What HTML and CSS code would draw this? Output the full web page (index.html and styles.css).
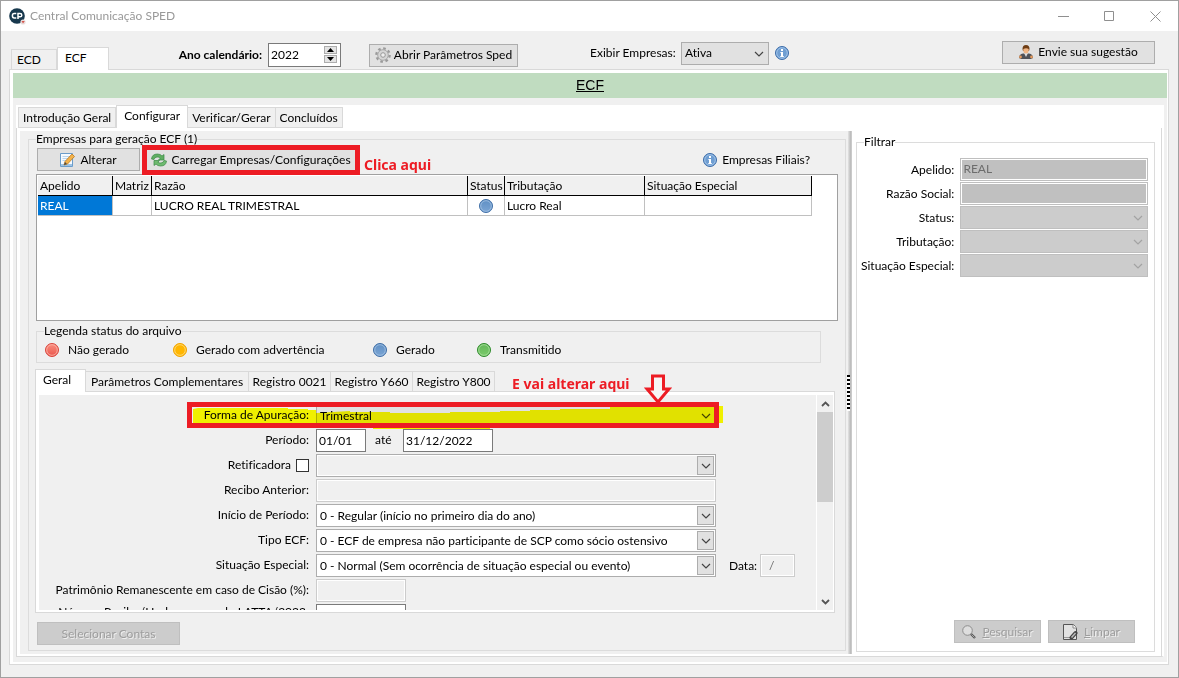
FILE: index.html
```html
<!DOCTYPE html>
<html lang="pt-BR">
<head>
<meta charset="utf-8">
<title>Central Comunicação SPED</title>
<link rel="stylesheet" href="styles.css">
</head>
<body>
<svg class="defs" width="0" height="0" aria-hidden="true">
  <defs>
    <linearGradient id="g-blue" x1="0" y1="0" x2="0" y2="1"><stop offset="0" stop-color="#5f8fc4"/><stop offset="1" stop-color="#7ba5d4"/></linearGradient>
    <linearGradient id="g-red" x1="0" y1="0" x2="0" y2="1"><stop offset="0" stop-color="#fa8f80"/><stop offset="1" stop-color="#e9564d"/></linearGradient>
    <linearGradient id="g-green" x1="0" y1="0" x2="0" y2="1"><stop offset="0" stop-color="#62b658"/><stop offset="1" stop-color="#7ccb6c"/></linearGradient>
    <symbol id="chev" viewBox="0 0 10 6"><path d="M1 1l4 4 4-4" fill="none" stroke="currentColor" stroke-width="1.2"/></symbol>
    <symbol id="info" viewBox="0 0 14 14">
      <circle cx="7" cy="7" r="6.5" fill="#6f9ed2" stroke="#3c6ca8"/>
      <circle cx="7" cy="7" r="5.3" fill="none" stroke="#a5c6ea" stroke-width=".9"/>
      <path d="M6 3h2v2H6zM5.4 6H8v4h.8v1H5.3v-1H6V7h-.6z" fill="#fff"/>
    </symbol>
    <symbol id="dot-blue" viewBox="0 0 14 14"><circle cx="7" cy="7" r="6.5" fill="url(#g-blue)" stroke="#3f6ea6"/><circle cx="7" cy="7" r="5.3" fill="none" stroke="#9dbde0" stroke-width=".9"/></symbol>
    <symbol id="dot-red" viewBox="0 0 14 14"><circle cx="7" cy="7" r="6.5" fill="url(#g-red)" stroke="#d8453d"/><circle cx="7" cy="7" r="5.3" fill="none" stroke="#fbb0a4" stroke-width=".9"/></symbol>
    <symbol id="dot-yellow" viewBox="0 0 14 14"><circle cx="7" cy="7" r="6.5" fill="#ffb600" stroke="#f0a400"/><circle cx="7" cy="7" r="5.3" fill="none" stroke="#ffd978" stroke-width=".9"/></symbol>
    <symbol id="dot-green" viewBox="0 0 14 14"><circle cx="7" cy="7" r="6.5" fill="url(#g-green)" stroke="#2f8a2c"/><circle cx="7" cy="7" r="5.3" fill="none" stroke="#a4dc98" stroke-width=".9"/></symbol>
  </defs>
</svg>

<div class="window">
  <header class="titlebar">
    <svg class="app-icon" width="17" height="17" viewBox="0 0 17 17">
      <circle cx="8" cy="8" r="7.8" fill="#17384d"/>
      <path d="M7.3 5.6H5.2Q3.4 5.6 3.4 7.8T5.2 10h2.1M9 11V5.6h2q1.8 0 1.8 1.6T11 8.8H9" fill="none" stroke="#fff" stroke-width="1.5"/>
      <circle cx="14" cy="14" r="2.6" fill="#e9dede"/><path d="M12.5 13l1.5 2.5 1.8-2.5z" fill="#d4584e"/>
    </svg>
    <span class="title">Central Comunicação SPED</span>
    <div class="caption">
      <button type="button" aria-label="Minimizar"><svg width="11" height="11" viewBox="0 0 11 11"><path d="M0 5.5h11" stroke="#8f8f8f"/></svg></button>
      <button type="button" aria-label="Maximizar"><svg width="11" height="11" viewBox="0 0 11 11"><path d="M.5.5h9v9h-9z" fill="none" stroke="#8f8f8f"/></svg></button>
      <button type="button" aria-label="Fechar"><svg width="11" height="11" viewBox="0 0 11 11"><path d="M.5.5l10 10M10.5.5l-10 10" stroke="#8f8f8f"/></svg></button>
    </div>
  </header>

  <div class="topbar">
    <div class="tabs" role="tablist">
      <button type="button" class="tab" role="tab">ECD</button>
      <button type="button" class="tab active wide" role="tab" aria-selected="true">ECF</button>
    </div>
    <div class="tools year-tools">
      <label class="bold" for="ano">Ano calendário:</label>
      <span class="spinner">
        <input id="ano" type="text" value="2022">
        <span class="spin-buttons">
          <button type="button" aria-label="Aumentar"><svg width="7" height="4" viewBox="0 0 7 4"><path d="M0 4L3.5 0 7 4z"/></svg></button>
          <button type="button" aria-label="Diminuir"><svg width="7" height="4" viewBox="0 0 7 4"><path d="M0 0l3.500 4L7 0z"/></svg></button>
        </span>
      </span>
      <button type="button" class="btn params">
        <svg width="16" height="16" viewBox="0 0 16 16"><circle cx="8" cy="8" r="6.600" fill="none" stroke="#9a9a9a" stroke-width="2.400" stroke-dasharray="2.600 2.580"/><circle cx="8" cy="8" r="5.300" fill="#d6d6d6" stroke="#a8a8a8"/><circle cx="8" cy="8" r="2.300" fill="#eee" stroke="#999"/></svg>
        Abrir Parâmetros Sped
      </button>
    </div>
    <div class="tools filter-tools">
      <label for="exibir">Exibir Empresas:</label>
      <span class="combo grey short">
        <select id="exibir"><option>Ativa</option></select>
        <svg class="arrow" width="10" height="6"><use href="#chev"/></svg>
      </span>
      <svg width="14" height="14"><use href="#info"/></svg>
    </div>
    <div class="tools suggest-tools">
      <button type="button" class="btn suggest">
        <svg width="14" height="14" viewBox="0 0 14 14"><path d="M0 13q0-4 4-4.600h6q4 .6 4 4.600l-2 1H2z" fill="#4f5257"/><path d="M5 8l2 4 2-4z" fill="#ddd"/><path d="M3.500 4Q3.500 0 7 0t3.500 4l-.5 2H4z" fill="#6f3d14"/><path d="M4.300 4q3-1.500 5.400 0v2Q9.500 8.500 7 8.500T4.300 6z" fill="#efb584"/><circle cx="1.500" cy="12" r="1.400" fill="#e59a5d"/><circle cx="12.500" cy="12" r="1.400" fill="#e59a5d"/></svg>
        Envie sua sugestão
      </button>
    </div>
  </div>

  <main class="page">
    <h1 class="banner">ECF</h1>
    <div class="inner">
      <div class="tabs main-tabs" role="tablist">
        <button type="button" class="tab" role="tab">Introdução Geral</button>
        <button type="button" class="tab active" role="tab" aria-selected="true">Configurar</button>
        <button type="button" class="tab" role="tab">Verificar/Gerar</button>
        <button type="button" class="tab" role="tab">Concluídos</button>
      </div>
      <div class="panes">
        <div class="left-pane">
          <fieldset class="group companies">
            <legend>Empresas para geração ECF (1)</legend>
            <div class="actions">
              <button type="button" class="btn edit">
                <svg width="15" height="16" viewBox="0 0 15 16"><path d="M.5 1.500h12v13H.5z" fill="#f6fafe" stroke="#6a9cca"/><path d="M2.500 4.500h8M2.500 6.500h6M2.500 8.500h4" stroke="#b8d3ec"/><path d="M1 12h11v2H1z" fill="#9cc3e6"/><path d="M4 13l1-3.500L12 2l2.500 2.500L7.500 12z" fill="#f3b24a" stroke="#b97a23" stroke-width=".8"/><path d="M4 13l1-3 2 2z" fill="#494949"/></svg>
                Alterar
              </button>
              <span class="callout">
                <button type="button" class="btn load">
                  <svg width="16" height="14" viewBox="0 0 16 14"><path d="M.5 6Q1 1 6.500 1q3 0 4.500 2l2-1.500V7H7.500l1.700-1.700Q8 3.800 6 4 3.500 4.200 3 6.500z" fill="#5fae62" stroke="#3b8a45" stroke-width=".7"/><path d="M15.500 8Q15 13 9.500 13q-3 0-4.500-2l-2 1.500V7.500h5.500L6.800 9.200Q8 10.200 10 10q2.500-.2 3-2.500z" fill="#6fbb70" stroke="#3b8a45" stroke-width=".7"/></svg>
                  Carregar Empresas/Configurações
                </button>
              </span>
              <span class="note">Clica aqui</span>
              <span class="branches"><svg width="14" height="14"><use href="#info"/></svg>Empresas Filiais?</span>
            </div>
            <div class="grid-box">
              <table class="grid">
                <colgroup><col class="c-nick"><col class="c-main"><col class="c-name"><col class="c-stat"><col class="c-trib"><col class="c-sit"></colgroup>
                <thead><tr><th>Apelido</th><th>Matriz</th><th>Razão</th><th>Status</th><th>Tributação</th><th>Situação Especial</th></tr></thead>
                <tbody><tr><td class="selected">REAL</td><td></td><td>LUCRO REAL TRIMESTRAL</td><td class="center"><svg width="14" height="14"><use href="#dot-blue"/></svg></td><td>Lucro Real</td><td></td></tr></tbody>
              </table>
            </div>
            <fieldset class="group key">
              <legend>Legenda status do arquivo</legend>
              <span><svg width="14" height="14"><use href="#dot-red"/></svg>Não gerado</span>
              <span><svg width="14" height="14"><use href="#dot-yellow"/></svg>Gerado com advertência</span>
              <span><svg width="14" height="14"><use href="#dot-blue"/></svg>Gerado</span>
              <span><svg width="14" height="14"><use href="#dot-green"/></svg>Transmitido</span>
            </fieldset>
            <div class="tabs detail-tabs" role="tablist">
              <button type="button" class="tab active" role="tab" aria-selected="true">Geral</button>
              <button type="button" class="tab" role="tab">Parâmetros Complementares</button>
              <button type="button" class="tab record" role="tab">Registro 0021</button>
              <button type="button" class="tab record" role="tab">Registro Y660</button>
              <button type="button" class="tab record" role="tab">Registro Y800</button>
              <span class="note below">E vai alterar aqui</span>
              <svg class="pointer" width="28" height="32" viewBox="0 0 28 32"><path d="M8.500 2h11v13h5.500L14 28 3 15h5.500z" fill="#f7f5f5" stroke="#ed1c24" stroke-width="3"/></svg>
            </div>
            <div class="detail">
              <form class="form">
                <div class="row">
                  <label for="forma">Forma de Apuração:</label>
                  <span class="combo grey"><select id="forma"><option>Trimestral</option></select><svg class="arrow" width="10" height="6"><use href="#chev"/></svg></span>
                  <svg class="marker" width="536" height="28" viewBox="0 0 536 28"><path fill="#ff0" d="M6 7l5-1h90v1h20v1h8v3l34-2v1h40v1h60v-1h50v-1h30v-1h30v-1h50V4h113v17H531v2H303v4H186v-4H6z"/></svg>
                  <span class="frame"></span>
                </div>
                <div class="row">
                  <label for="de">Período:</label>
                  <input id="de" class="box day" type="text" value="01/01">
                  <label class="until" for="ate">até</label>
                  <input id="ate" class="box date" type="text" value="31/12/2022">
                </div>
                <div class="row">
                  <label class="check">Retificadora <input type="checkbox"></label>
                  <span class="combo empty"><select aria-label="Retificadora"><option></option></select><span class="drop"><svg width="10" height="6"><use href="#chev"/></svg></span></span>
                </div>
                <div class="row">
                  <label for="recibo">Recibo Anterior:</label>
                  <input id="recibo" class="box off full" type="text" disabled>
                </div>
                <div class="row">
                  <label for="inicio">Início de Período:</label>
                  <span class="combo"><select id="inicio"><option>0 - Regular (início no primeiro dia do ano)</option></select><span class="drop"><svg width="10" height="6"><use href="#chev"/></svg></span></span>
                </div>
                <div class="row">
                  <label for="tipo">Tipo ECF:</label>
                  <span class="combo"><select id="tipo"><option>0 - ECF de empresa não participante de SCP como sócio ostensivo</option></select><span class="drop"><svg width="10" height="6"><use href="#chev"/></svg></span></span>
                </div>
                <div class="row">
                  <label for="situacao">Situação Especial:</label>
                  <span class="combo"><select id="situacao"><option>0 - Normal (Sem ocorrência de situação especial ou evento)</option></select><span class="drop"><svg width="10" height="6"><use href="#chev"/></svg></span></span>
                  <label class="data" for="data">Data:</label>
                  <input id="data" class="box off slash" type="text" value="/" disabled>
                </div>
                <div class="row">
                  <label for="cisao">Patrimônio Remanescente em caso de Cisão (%):</label>
                  <input id="cisao" class="box off date" type="text" disabled>
                </div>
                <div class="row top">
                  <label for="recibo2">Número Recibo/Hash recuperado LATTA/2022:</label>
                  <input id="recibo2" class="box date" type="text">
                </div>
              </form>
              <div class="scroll">
                <button type="button" aria-label="Rolar para cima"><svg width="9" height="6" viewBox="0 0 9 6"><path d="M1 5l3.500-3.500L8 5" fill="none" stroke="#555" stroke-width="1.800"/></svg></button>
                <div class="track"><div class="thumb"></div></div>
                <button type="button" aria-label="Rolar para baixo"><svg width="9" height="6" viewBox="0 0 9 6"><path d="M1 1l3.500 3.500L8 1" fill="none" stroke="#555" stroke-width="1.800"/></svg></button>
              </div>
            </div>
            <button type="button" class="btn disabled accounts" disabled>Selecionar Contas</button>
          </fieldset>
        </div>
        <div class="splitter"><span class="grip"></span></div>
        <div class="right-pane">
          <fieldset class="group filter">
            <legend>Filtrar</legend>
            <div class="fields">
              <label for="f1">Apelido:</label><input id="f1" class="box dim" type="text" value="REAL" disabled>
              <label for="f2">Razão Social:</label><input id="f2" class="box dim" type="text" disabled>
              <label for="f3">Status:</label><span class="combo dim"><select id="f3" disabled></select><svg class="arrow" width="10" height="6"><use href="#chev"/></svg></span>
              <label for="f4">Tributação:</label><span class="combo dim"><select id="f4" disabled></select><svg class="arrow" width="10" height="6"><use href="#chev"/></svg></span>
              <label for="f5">Situação Especial:</label><span class="combo dim"><select id="f5" disabled></select><svg class="arrow" width="10" height="6"><use href="#chev"/></svg></span>
            </div>
            <div class="filter-actions">
              <button type="button" class="btn disabled" disabled><svg width="14" height="14" viewBox="0 0 14 14"><circle cx="5.500" cy="5.500" r="4.800" fill="#dedede" stroke="#8d8d8d"/><path d="M9 9l4 4" stroke="#555" stroke-width="2.400"/><path d="M9.500 9.500l3 3" stroke="#aaa"/></svg><span><u>P</u>esquisar</span></button>
              <button type="button" class="btn disabled" disabled><svg width="15" height="16" viewBox="0 0 15 16"><path d="M.5.5h10l3 3v12H.5z" fill="#e2e2e2" stroke="#555"/><path d="M10 .5v3.500h4" fill="#fff" stroke="#888"/><path d="M1 13.500h8" stroke="#999"/><path d="M8.500 13.500L12.500 9" stroke="#444" stroke-width="4" stroke-linecap="round"/><path d="M8.500 13.500L12.500 9" stroke="#bbb" stroke-width="1.500"/></svg><span><u>L</u>impar</span></button>
            </div>
          </fieldset>
        </div>
      </div>
    </div>
  </main>
</div>
</body>
</html>
```
FILE: styles.css
```css
* { box-sizing: border-box; }

body {
  margin: 0;
  font: 12px/16px Lato, "Open Sans", sans-serif;
  font-variant-ligatures: none;
  color: #000;
}

button, input, select { font: inherit; font-variant-ligatures: none; color: inherit; margin: 0; }
button { padding: 0; border: 0; background: none; white-space: nowrap; }
svg { flex: none; display: block; }
.defs { position: absolute; }

.window {
  display: flex;
  flex-direction: column;
  height: 100vh;
  min-height: 640px;
  border: 1px solid #a0a0a0;
  background: #f0f0f0;
}

.titlebar { display: flex; align-items: center; height: 30px; padding-left: 8px; background: #fff; color: #999; }
.title { margin-left: 4px; }
.caption { display: flex; margin-left: auto; }
.caption button { display: grid; place-items: center; width: 46px; height: 28px; }

.topbar { display: flex; height: 38px; padding: 0 23px 0 10px; }
.tools { display: flex; align-items: center; height: 24px; white-space: nowrap; }
.year-tools { margin: 12px 0 0 67px; }
.filter-tools { margin: 10px 0 0 72px; gap: 6px; }
.filter-tools label { width: 85px; text-align: right; }
.suggest-tools { margin: 9px 0 0 auto; }
.bold { width: 86px; font-weight: 700; margin-right: 6px; text-align: right; }

.tabs { display: flex; align-items: flex-end; position: relative; z-index: 1; height: 22px; margin-bottom: -1px; }
.tab {
  height: 21px;
  padding: 0 5px;
  border: 1px solid #d9d9d9;
  border-left-width: 0;
  background: #f0f0f0;
}
.tab:first-child { border-left-width: 1px; }
.tab.active { height: 23px; padding: 0 7px 3px; border-bottom: 0; border-left-width: 1px; background: #fff; }
.main-tabs .tab { padding: 0 4px; }
.main-tabs .tab.active { padding: 0 7px 3px; }
.topbar .tabs { height: 39px; }
.topbar .tab { width: 46px; text-align: left; }
.topbar .tab.wide { width: 52px; }

.btn {
  display: flex;
  align-items: center;
  justify-content: center;
  gap: 4px;
  height: 23px;
  border: 1px solid #adadad;
  background: #e1e1e1;
}
.btn.disabled { border-color: #bfbfbf; background: #ccc; color: #9d9d9d; text-shadow: 1px 1px #eee; }
.params { width: 149px; margin-left: 28px; gap: 3px; }
.suggest { width: 153px; gap: 5px; }

.spinner { display: flex; width: 73px; height: 24px; padding: 2px 3px 3px 2px; border: 1px solid #7a7a7a; background: #fff; }
.spinner input { flex: 1; min-width: 0; border: 0; padding: 0; background: none; }
.spin-buttons { display: flex; flex-direction: column; gap: 1px; width: 13px; }
.spin-buttons button { flex: 1; display: grid; place-items: center; border: 1px solid #adadad; background: #e4e4e4; }

.combo { position: relative; display: block; width: 400px; height: 23px; border: 1px solid #adadad; background: #fff; }
.combo select { appearance: none; width: 100%; height: 100%; padding: 0 22px 0 3px; border: 0; background: none; opacity: 1; }
.combo .arrow { position: absolute; right: 4px; top: 8px; color: #444; pointer-events: none; }
.combo .drop {
  position: absolute; top: 1px; right: 1px; bottom: 1px; width: 17px;
  display: grid; place-items: center;
  border: 1px solid #adadad; background: #e1e1e1; color: #444; pointer-events: none;
}
.combo.grey { background: #e1e1e1; }
.combo.empty { background: #f0f0f0; box-shadow: inset 0 0 0 1px #fff; }
.combo.short { width: 88px; }
.combo.dim { width: auto; border-color: #bfbfbf; background: #ccc; }
.combo.dim .arrow { color: #a3a3a3; }

.box { height: 23px; padding: 0 2px 1px; border: 1px solid #7a7a7a; background: #fff; }
.box.off { border-color: #ccc; background: #f0f0f0; box-shadow: inset 0 0 0 1px #fff; color: #6d6d6d; }
.box.dim { width: 100%; min-width: 0; padding-bottom: 3px; border-color: #bfbfbf; background: #c0c0c0; box-shadow: inset 0 0 0 1px #fff; color: #6d6d6d; }

.page {
  flex: 1;
  min-height: 0;
  display: flex;
  flex-direction: column;
  margin: 0 9px 12px 8px;
  padding: 3px 1px 2px 3px;
  border: 1px solid #d9d9d9;
  background: #fff;
}
.banner {
  margin: 0;
  height: 25px;
  background: #c0dcc0;
  font: 14px/24px "Liberation Sans", Arial, sans-serif;
  text-align: center;
  text-decoration: underline;
}
.inner {
  flex: 1;
  min-height: 0;
  display: flex;
  flex-direction: column;
  padding: 7px 3px 5px;
  background: #f0f0f0;
}
.inner > .tabs { height: 23px; padding-left: 2px; background: #fff; z-index: 0; }
.panes {
  flex: 1;
  min-height: 0;
  display: flex;
  padding: 3px 0 2px 3px;
  border: 1px solid #d9d9d9;
  border-right: 2px solid #fff;
  background: #fff;
  box-shadow: inset -1px 0 #d9d9d9;
}
.inner > .tabs .active { position: relative; z-index: 1; }

.left-pane { flex: 1; min-width: 0; display: flex; padding: 0 2px 3px 8px; background: #f0f0f0; }
.right-pane { width: 310px; flex: none; display: flex; padding: 3px 7px 2px 4px; }
.group { flex: 1; min-width: 0; margin: 0; padding: 0 7px; border: 1px solid #dcdcdc; }
.group legend { height: 16px; padding: 0; white-space: nowrap; }
.companies { display: flex; flex-direction: column; padding-bottom: 5px; }

.splitter { flex: none; width: 4px; position: relative; background: linear-gradient(90deg, #e4e4e4, #bdbdbd 60%, #d0d0d0); }
.grip { position: absolute; top: 244px; left: -1px; width: 3px; height: 36px; background: repeating-linear-gradient(#000 0 2px, #fff 2px 4px); }

.actions { display: flex; align-items: center; height: 27px; padding: 0 0 2px 1px; }
.edit { width: 103px; gap: 5px; }
.callout { position: relative; width: 218px; margin-left: 2px; }
.callout .btn { width: 100%; }
.callout::after { content: ""; position: absolute; inset: -3px 0 -4px; border: 5px solid #ed1c24; pointer-events: none; z-index: 2; }
.note { margin-left: 4px; padding-top: 10px; color: #ed1c24; font: 700 14px/16px "Noto Sans", "Open Sans", sans-serif; white-space: nowrap; }
.note.below { margin: 0 0 0 17px; padding: 0; }
.branches { display: flex; gap: 5px; align-items: center; margin: 0 28px 0 auto; white-space: nowrap; }

.grid-box { height: 147px; margin: 0; border: 1px solid #a0a0a0; background: #fff; padding: 1px; overflow: hidden; }
.grid { width: 774px; border-collapse: separate; border-spacing: 0; table-layout: fixed; }
.c-nick { width: 75px; } .c-main { width: 39px; } .c-name { width: 316px; }
.c-stat { width: 37px; } .c-trib { width: 140px; } .c-sit { width: 167px; }
.grid th, .grid td { height: 20px; padding: 1px 0 0 2px; text-align: left; font-weight: 400; white-space: nowrap; overflow: hidden; }
.grid th { background: #f0f0f0; border-right: 1px solid #000; border-bottom: 1px solid #000; }
.grid td { border-right: 1px solid #c0c0c0; border-bottom: 1px solid #c0c0c0; }
.grid .selected { background: #0078d7; color: #fff; }
.grid .center { padding: 0; }
.grid .center svg { margin: 0 auto; }

.key { flex: none; width: 785px; height: 40px; margin-top: 2px; display: grid; grid-template-columns: 128px 200px 104px auto; align-items: center; padding: 3px 8px 0; }
.key legend { margin-left: -1px; }
.key span { display: flex; align-items: center; gap: 9px; }

.detail-tabs { margin: 6px 0 -1px -1px; height: 23px; flex: none; }
.detail-tabs .tab.active { width: 51px; text-align: left; }
.detail-tabs .record { width: 82px; padding: 0; }
.detail { flex: 1; min-height: 0; display: flex; margin: 0 3px 0 -1px; padding: 3px 1px 2px 3px; border: 1px solid #d9d9d9; background: #fff; }
.form { flex: 1; min-width: 0; padding-top: 9px; background: #f0f0f0; overflow: hidden; display: flex; flex-direction: column; gap: 2px; }
.row { position: relative; flex: none; display: flex; align-items: center; height: 23px; }
.row.top { align-items: flex-start; }
.row > label:first-child { width: 270px; margin-right: 7px; text-align: right; white-space: nowrap; flex: none; padding-bottom: 1px; }
.row > .check { display: flex; justify-content: flex-end; align-items: center; gap: 5px; }
.check input { appearance: none; width: 13px; height: 13px; border: 1px solid #333; background: #fff; }
.day { width: 50px; }
.date { width: 90px; }
.full { width: 400px; }
.until { width: 28px; padding-bottom: 2px; margin-left: 9px; }
.data { width: 31px; margin-left: 13px; }
.slash { width: 35px; padding-left: 8px; }

/* Highlighter and frame drawn over the first row */
.marker { position: absolute; left: 148px; top: -2px; mix-blend-mode: multiply; pointer-events: none; }
.frame { position: absolute; left: 148px; top: -2px; width: 532px; height: 26px; border: 5px solid #ed1c24; pointer-events: none; }
.pointer { position: absolute; left: 609px; top: 5px; pointer-events: none; }

.scroll { flex: none; display: flex; flex-direction: column; width: 17px; border-left: 1px solid #fff; background: #f0f0f0; }
.scroll button { display: grid; place-items: center; height: 17px; }
.track { flex: 1; }
.thumb { height: 90px; max-height: 100%; background: #cdcdcd; }
.accounts { width: 143px; margin: 9px 0 0 1px; flex: none; }

.filter { display: flex; flex-direction: column; padding: 0 6px 8px 4px; }
.filter legend { margin-left: 3px; }
.fields { display: grid; grid-template-columns: 1fr 188px; gap: 1px 6px; align-items: center; padding-top: 8px; }
.fields label { text-align: right; white-space: nowrap; }
.filter-actions { display: flex; justify-content: flex-end; gap: 7px; margin: auto 13px 0 0; }
.filter-actions .btn { width: 87px; gap: 6px; }
```
